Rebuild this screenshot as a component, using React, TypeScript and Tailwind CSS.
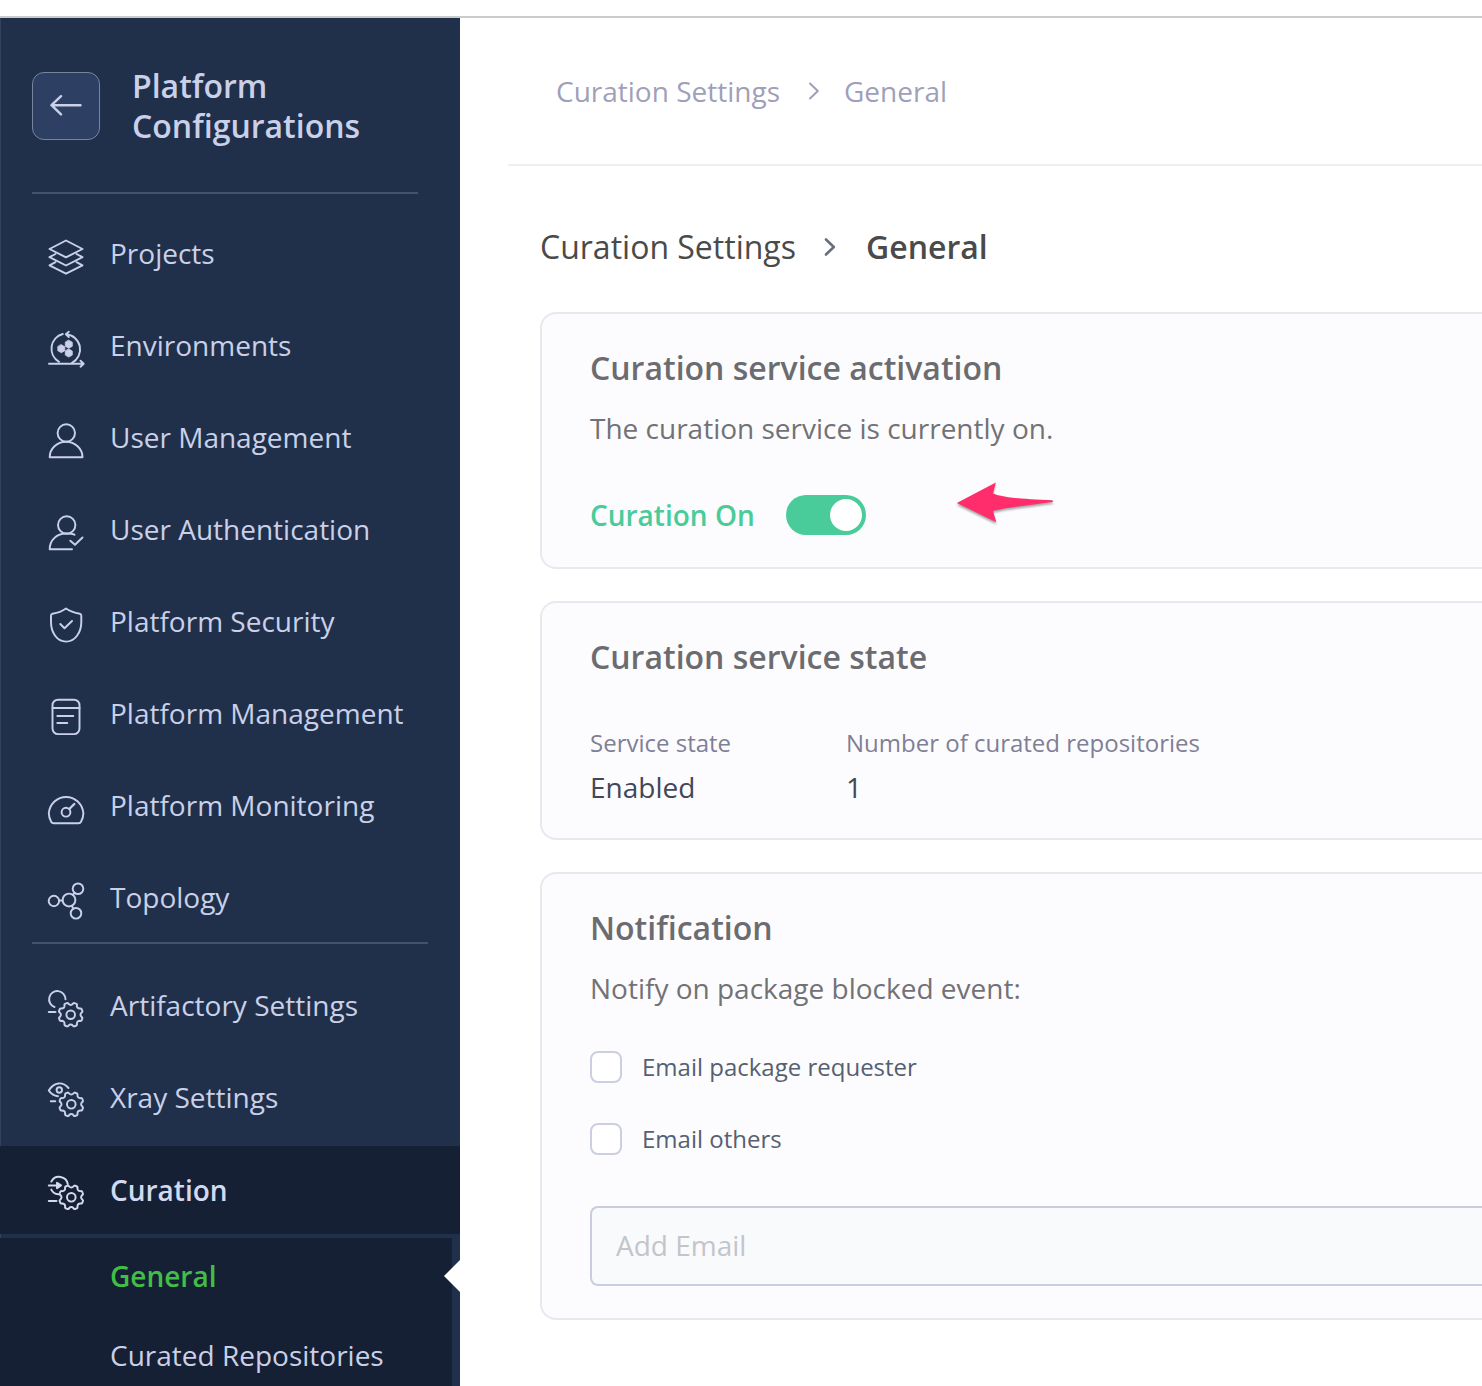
import { useState, type ReactNode } from "react";

function gearPath(cx: number, cy: number) {
  const teeth = 8;
  const step = (Math.PI * 2) / teeth;
  const at = (r: number, a: number) =>
    `${(cx + r * Math.cos(a)).toFixed(2)} ${(cy + r * Math.sin(a)).toFixed(2)}`;
  let d = "";
  for (let i = 0; i < teeth; i++) {
    const a = i * step + step / 2;
    const half = step * 0.24;
    d += `${i === 0 ? "M" : "L"}${at(11.2, a - half)}`;
    d += `Q${at(12.6, a - half * 0.9)} ${at(12.2, a)}`;
    d += `Q${at(12.6, a + half * 0.9)} ${at(11.2, a + half)}`;
    d += `Q${at(8.6, a + step / 2)} ${at(11.2, a + step - half)}`;
  }
  return d + "Z";
}

function Gear({ cx, cy }: { cx: number; cy: number }) {
  return (
    <>
      <path d={gearPath(cx, cy)} />
      <circle cx={cx} cy={cy} r="4.3" />
    </>
  );
}

function Icon({ children }: { children: ReactNode }) {
  return (
    <svg
      viewBox="0 0 36 42"
      className="h-[42px] w-9 shrink-0 overflow-visible"
      fill="none"
      stroke="currentColor"
      strokeWidth="1.95"
      strokeLinecap="round"
      strokeLinejoin="round"
      aria-hidden="true"
    >
      {children}
    </svg>
  );
}

const hexagon = (x: number, y: number) =>
  `M${x} ${y - 4}L${x + 3.5} ${y - 2}V${y + 2}L${x} ${y + 4}L${x - 3.5} ${y + 2}V${y - 2}Z`;

const platformItems: { label: string; icon: ReactNode }[] = [
  {
    label: "Projects",
    icon: (
      <>
        <path d="M18 7.5L34.5 16L18 24.3L1.5 16Z" />
        <path d="M7.5 21L1.5 24.2L18 32.5L34.5 24.2L28.5 21" />
        <path d="M7.5 29.2L1.5 32.4L18 40.7L34.5 32.4L28.5 29.2" />
      </>
    ),
  },
  {
    label: "Environments",
    icon: (
      <>
        <path d="M11 36.8A15.2 15.2 0 0 1 14.8 9" />
        <path d="M18 9.2A15.2 15.2 0 0 1 24 37.8" />
        <path d="M20.8 6.8L18 9.2L20.8 12" />
        <path d="M1 38.7H35.5M32.5 35.7L35.7 38.7L32.5 41.7" />
        <g fill="currentColor" strokeWidth="0.8">
          <path d={hexagon(13.3, 23.7)} />
          <path d={hexagon(20.8, 19.3)} />
          <path d={hexagon(20.8, 28.1)} />
        </g>
      </>
    ),
  },
  {
    label: "User Management",
    icon: (
      <>
        <circle cx="18.3" cy="16" r="8.7" />
        <path d="M1.7 40.2C1.7 31.5 9 24.7 18 24.7S34.5 31.5 34.5 40.2Z" />
      </>
    ),
  },
  {
    label: "User Authentication",
    icon: (
      <>
        <circle cx="18.7" cy="16" r="8.7" />
        <path d="M24 40.2H1.7C1.7 31 9 24.5 18 24.5C21 24.5 24 24.4 26.5 25.7" />
        <path d="M22.3 31.7L27 35.8L34.5 28.5" />
      </>
    ),
  },
  {
    label: "Platform Security",
    icon: (
      <>
        <path d="M18 7.5C13.5 10.8 9 12 4.5 12.7Q3 13 3 14.8V21C3 31.5 9 40.6 18 40.6S33.3 31.5 33.3 21V14.8Q33.3 13 31.8 12.7C27.3 12 22.5 10.8 18 7.5Z" />
        <path d="M12.3 23L16.5 27.3L24 20" />
      </>
    ),
  },
  {
    label: "Platform Management",
    icon: (
      <>
        <rect x="4.5" y="6.7" width="27" height="34.4" rx="5.5" />
        <path d="M4.5 15H31.5M9.3 23H25.3M9.3 30H19.3" />
      </>
    ),
  },
  {
    label: "Platform Monitoring",
    icon: (
      <>
        <path d="M5.5 38.2Q4 38.2 3.3 37C1.8 34.5 .8 31.3 .8 28A17.4 18 0 0 1 35.4 28C35.4 31.3 34.4 34.5 32.9 37Q32.2 38.2 30.7 38.2Z" />
        <circle cx="18" cy="27.2" r="4.4" />
        <path d="M21.3 24L26.3 19" strokeWidth="2.4" />
      </>
    ),
  },
  {
    label: "Topology",
    icon: (
      <>
        <circle cx="5.9" cy="24" r="5.2" />
        <circle cx="21" cy="23" r="6.4" />
        <circle cx="30" cy="11.7" r="5.3" />
        <circle cx="28" cy="36.3" r="5.3" />
        <path d="M11.3 23.5H14.6M24.8 17.6L26.8 15.8M23.8 29L25.6 31.6" />
      </>
    ),
  },
];

const serviceItems: { label: string; icon: ReactNode; active?: boolean }[] = [
  {
    label: "Artifactory Settings",
    icon: (
      <>
        <path d="M6.5 22A8.2 8.2 0 1 1 17.5 14.3" />
        <path d="M.8 27H7.5" />
        <Gear cx={22.7} cy={29.7} />
      </>
    ),
  },
  {
    label: "Xray Settings",
    icon: (
      <>
        <path d="M10 19.2C6.5 18.8 3 17 .8 13.5C6 4.5 15 4.5 20.5 11" />
        <circle cx="11.3" cy="13" r="2.7" />
        <path d="M2.8 24.3H7.3" />
        <Gear cx={23.3} cy={27.3} />
      </>
    ),
  },
  {
    label: "Curation",
    active: true,
    icon: (
      <>
        <path d="M3.3 12.6A8.8 8.8 0 0 1 19.8 15.2" />
        <path d="M3.3 20.6C4.8 23.6 7 25 10.3 25.2" />
        <path d="M.8 16.4H9" />
        <path d="M9 13.8L13 16.4L9 19.2Z" fill="currentColor" />
        <path d="M.8 32H8.5" />
        <Gear cx={23.3} cy={28.3} />
      </>
    ),
  },
];

function NavItem({ label, icon, active }: { label: string; icon: ReactNode; active?: boolean }) {
  return (
    <a
      href="#"
      className={
        active
          ? "flex h-[88px] items-center gap-[26px] bg-[#162034] pl-12 font-semibold text-[#d3d9ee]"
          : "flex h-[88px] items-center gap-[26px] pl-12"
      }
    >
      <Icon>{icon}</Icon>
      <span className={active ? "whitespace-nowrap" : "pb-0.5 whitespace-nowrap"}>{label}</span>
    </a>
  );
}

function Sidebar() {
  return (
    <aside className="relative w-[460px] shrink-0 bg-[#20304a] text-[28px] leading-10 text-[#c9d0e8] shadow-[inset_1px_0_0_#33425c]">
      <div className="flex items-center gap-8 px-8 pt-12 pb-[46px]">
        <button
          type="button"
          aria-label="Back"
          className="flex size-[68px] shrink-0 items-center justify-center rounded-xl border border-[#76849f] bg-[#2d4063]"
        >
          <svg viewBox="0 0 32 22" className="h-[22px] w-8" fill="none" stroke="currentColor" strokeWidth="2.4" strokeLinecap="round" strokeLinejoin="round" aria-hidden="true">
            <path d="M30.5 10.2H1.5M11 1.2L1.5 10.2L11 19.4" />
          </svg>
        </button>
        <h1 className="text-[32px] leading-10 font-semibold">
          Platform
          <br />
          Configurations
        </h1>
      </div>
      <hr className="mr-[42px] ml-8 border-t-2 border-[#465269]" />
      <nav aria-label="Platform configurations">
        <div className="flex flex-col gap-1 pt-4">
          {platformItems.map((item) => (
            <NavItem key={item.label} {...item} />
          ))}
        </div>
        <hr className="mx-8 border-t-2 border-[#465269]" />
        <div className="flex flex-col gap-1 pt-[18px]">
          {serviceItems.map((item) => (
            <NavItem key={item.label} {...item} />
          ))}
        </div>
        <div className="mt-1 mr-2 flex flex-col gap-1 bg-[#162034]">
          <a href="#" aria-current="page" className="relative flex h-[76px] items-center pl-[110px] font-semibold text-[#40be46]">
            General
            <svg viewBox="0 0 16 32" className="absolute top-[22px] -right-2 h-8 w-4" aria-hidden="true">
              <path d="M16 0V32L0 16Z" fill="#fff" />
            </svg>
          </a>
          <a href="#" className="flex h-[76px] items-center pb-0.5 pl-[110px]">
            Curated Repositories
          </a>
        </div>
      </nav>
    </aside>
  );
}

function Chevron({ className }: { className: string }) {
  return (
    <svg viewBox="0 0 12 18" className={className} fill="none" stroke="currentColor" strokeLinecap="round" strokeLinejoin="round" aria-hidden="true">
      <path d="M2 1.5L9.8 9L2 16.5" />
    </svg>
  );
}

function Card({ title, children }: { title: string; children: ReactNode }) {
  return (
    <section className="rounded-l-2xl border-2 border-r-0 border-[#e9e9ed] bg-[#fcfcfe] pt-[34px] pl-12">
      <h2 className="text-[32px] leading-10 font-semibold text-[#6c6c70]">{title}</h2>
      {children}
    </section>
  );
}

function Checkbox({ label }: { label: string }) {
  return (
    <label className="flex h-8 items-center gap-5 text-2xl text-[#556070]">
      <input type="checkbox" className="size-8 shrink-0 appearance-none rounded-lg border-2 border-[#cccee2] bg-white checked:bg-[#4acb9a]" />
      {label}
    </label>
  );
}

export default function App() {
  const [on, setOn] = useState(true);
  return (
    <div className="flex h-screen flex-col overflow-hidden bg-white pt-4 font-['Open_Sans',sans-serif]">
      <div className="flex min-h-0 flex-1 border-t-2 border-[#cbcbcb]">
        <Sidebar />
        <main className="min-w-0 flex-1 pl-12">
          <nav aria-label="Breadcrumb" className="flex items-center border-b-2 border-[#eeeef5] py-[54px] pl-12 text-[28px] leading-[38px] text-[#9f9fb9]">
            <a href="#">Curation Settings</a>
            <Chevron className="mr-6 ml-7 h-[18px] w-3 stroke-2" />
            <span>General</span>
          </nav>
          <div className="pl-8">
            <div className="flex items-center pt-[61px] pb-[45px] text-[32px] leading-10 text-[#4a4a4a]">
              <a href="#">Curation Settings</a>
              <Chevron className="mr-[30px] ml-7 h-[18px] w-3 stroke-[2.6] text-[#66707c]" />
              <span className="font-semibold">General</span>
            </div>
            <div className="flex flex-col gap-8">
              <Card title="Curation service activation">
                <p className="mt-5 text-[28px] leading-10 text-[#727276]">The curation service is currently on.</p>
                <div className="relative mt-[47px] mb-8 flex h-10 items-center gap-[31px]">
                  <label htmlFor="curation" className="text-[28px] leading-10 font-semibold text-[#4acb9a]">
                    Curation On
                  </label>
                  <button
                    id="curation"
                    type="button"
                    role="switch"
                    aria-checked={on}
                    onClick={() => setOn(!on)}
                    className={on ? "flex h-10 w-20 justify-end rounded-full bg-[#4acb9a] p-1" : "flex h-10 w-20 justify-start rounded-full bg-gray-300 p-1"}
                  >
                    <span className="size-8 rounded-full bg-white" />
                  </button>
                  <svg viewBox="0 0 98 42" className="absolute -top-[13px] left-[366px] h-[42px] w-[98px] overflow-visible drop-shadow-[0_2px_1px_rgba(0,0,0,0.35)]" aria-hidden="true">
                    <path d="M.8 21L39.8 .5L37 11.5C46 15.5 70 17.5 96.5 18.2L97 20C75 23 50 25.5 37 29L40.3 40.2Z" fill="#ff2d6b" />
                  </svg>
                </div>
              </Card>
              <Card title="Curation service state">
                <dl className="mt-[50px] mb-[31px] grid grid-cols-[256px_1fr]">
                  <div>
                    <dt className="text-2xl text-[#7f7f96]">Service state</dt>
                    <dd className="mt-2 text-[28px] leading-10 text-[#414857]">Enabled</dd>
                  </div>
                  <div>
                    <dt className="text-2xl text-[#7f7f96]">Number of curated repositories</dt>
                    <dd className="mt-2 text-[28px] leading-10 text-[#414857]">1</dd>
                  </div>
                </dl>
              </Card>
              <Card title="Notification">
                <p className="mt-5 text-[28px] leading-10 text-[#727276]">Notify on package blocked event:</p>
                <div className="mt-[43px] flex flex-col gap-10">
                  <Checkbox label="Email package requester" />
                  <Checkbox label="Email others" />
                </div>
                <input
                  type="email"
                  aria-label="Add Email"
                  placeholder="Add Email"
                  className="mt-[51px] mb-8 block h-20 w-full rounded-l-lg border-2 border-r-0 border-[#cacde1] bg-[#f9fafc] px-6 pb-0.5 text-[28px] placeholder:text-[#c3c5ca]"
                />
              </Card>
            </div>
          </div>
        </main>
      </div>
    </div>
  );
}
